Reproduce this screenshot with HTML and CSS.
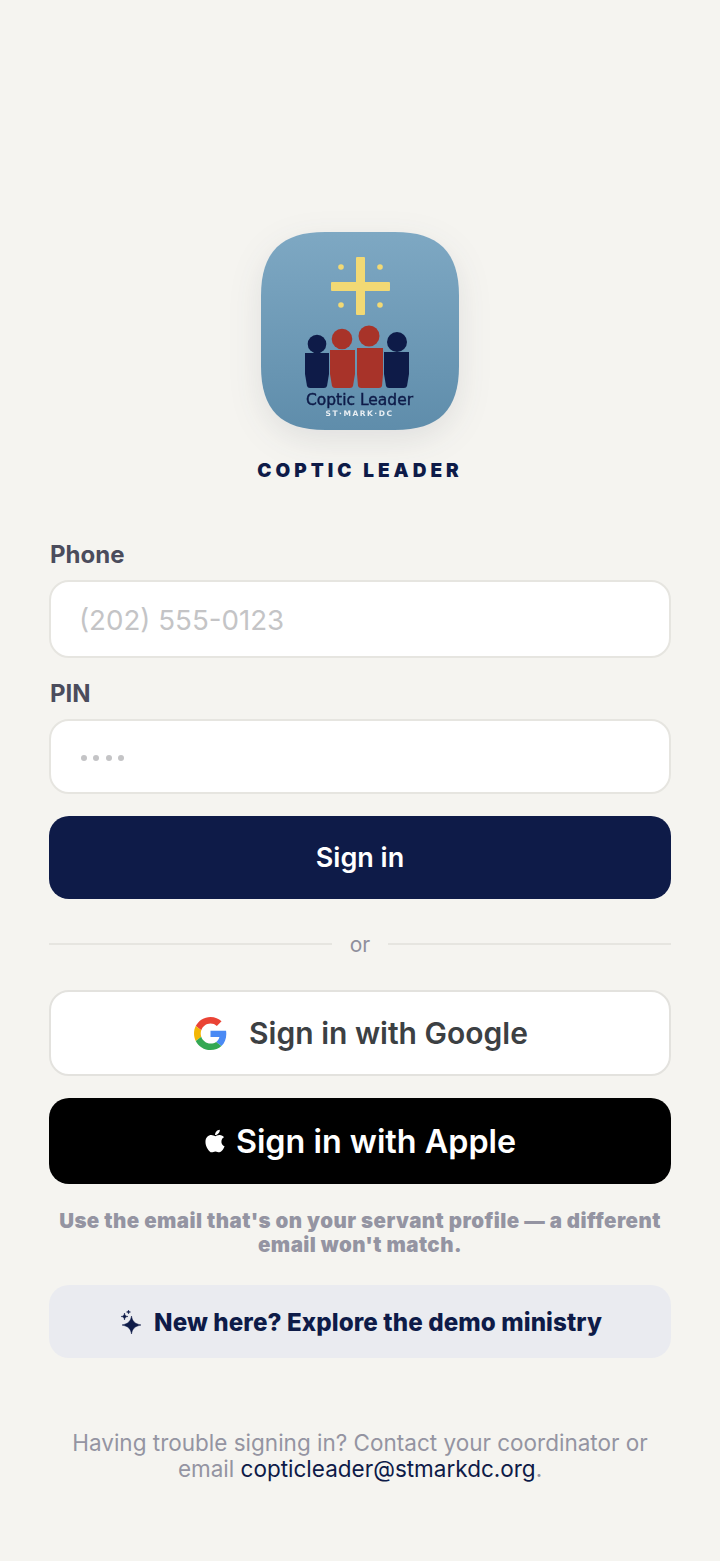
FILE: index.html
```html
<!doctype html>
<html>
<head>
  <meta charset="utf8">
  <title>Coptic Leader</title>
  <link rel="stylesheet" href="styles.css">
</head>
<body>
  <div class="page">
    <div class="brand">
      <svg class="logo" viewBox="0 0 198 198" width="198" height="198">
        <defs>
          <linearGradient id="tile" x1="0" y1="0" x2="0" y2="1">
            <stop offset="0" stop-color="#7ea8c3"/>
            <stop offset="1" stop-color="#5f8dab"/>
          </linearGradient>
        </defs>
        <path d="M64 0H134C178 0 198 20 198 64V134C198 178 178 198 134 198H64C20 198 0 178 0 134V64C0 20 20 0 64 0Z" fill="url(#tile)"/>
        <g transform="translate(1 0)">
          <!-- cross -->
          <g fill="#f2d974">
            <rect x="94" y="25" width="9" height="58" rx="1"/>
            <rect x="69" y="50" width="59" height="9" rx="1"/>
            <circle cx="79" cy="35" r="2.800"/>
            <circle cx="118" cy="35" r="2.800"/>
            <circle cx="79" cy="73" r="2.800"/>
            <circle cx="118" cy="73" r="2.800"/>
          </g>
          <!-- people -->
          <circle cx="55" cy="112" r="9.300" fill="#0e1b48"/>
          <path d="M43 121H67V142L65 154Q64.500 156 62 156H48Q45.500 156 45 154L43 142Z" fill="#0e1b48"/>
          <circle cx="80" cy="107" r="10.300" fill="#a83329"/>
          <path d="M68 118H93V142L91 154Q90.500 156 88 156H73Q70.500 156 70 154L68 142Z" fill="#a83329"/>
          <circle cx="107" cy="104" r="10.500" fill="#a83329"/>
          <path d="M95 116H121V142L120 154Q119.500 156 117 156H99Q96.500 156 96 154L95 142Z" fill="#a83329"/>
          <circle cx="135" cy="110" r="10" fill="#0e1b48"/>
          <path d="M122 120H147V142L145 154Q144.500 156 142 156H127Q124.500 156 124 154L122 142Z" fill="#0e1b48"/>
          <text class="logo-name" x="97.500" y="173" text-anchor="middle">Coptic Leader</text>
          <text class="logo-sub" x="97.500" y="184" text-anchor="middle">ST·MARK·DC</text>
        </g>
      </svg>
      <div class="brand-name">COPTIC LEADER</div>
    </div>

    <div class="field-label">Phone</div>
    <div class="input input-phone">(202) 555-0123</div>

    <div class="field-label label-pin">PIN</div>
    <div class="input input-pin">
      <span class="pin-dot"></span><span class="pin-dot"></span><span class="pin-dot"></span><span class="pin-dot"></span>
    </div>

    <div class="btn btn-primary">Sign in</div>

    <div class="divider"><span class="divider-line"></span><span>or</span><span class="divider-line"></span></div>

    <div class="btn btn-google">
      <svg class="google-icon" viewBox="0 0 48 48" width="33" height="33">
        <path fill="#ea4335" d="M24 9.500c3.540 0 6.710 1.220 9.210 3.600l6.850-6.850C35.900 2.380 30.470 0 24 0 14.620 0 6.510 5.380 2.560 13.220l7.980 6.190C12.430 13.720 17.740 9.500 24 9.500z"/>
        <path fill="#4a8af4" d="M46.980 24.550c0-1.570-.15-3.090-.38-4.550H24v9.020h12.940c-.58 2.960-2.260 5.480-4.780 7.180l7.730 6c4.510-4.180 7.090-10.360 7.090-17.650z"/>
        <path fill="#f3b605" d="M10.530 28.590c-.48-1.450-.76-2.990-.76-4.590s.27-3.140.76-4.590l-7.980-6.190C.92 16.460 0 20.120 0 24c0 3.880.92 7.540 2.560 10.780l7.970-6.190z"/>
        <path fill="#34a853" d="M24 48c6.480 0 11.930-2.130 15.890-5.810l-7.730-6c-2.150 1.450-4.920 2.300-8.160 2.300-6.260 0-11.570-4.220-13.470-9.910l-7.980 6.190C6.510 42.620 14.620 48 24 48z"/>
      </svg>
      <span>Sign in with Google</span>
    </div>

    <div class="btn btn-apple">
      <svg class="apple-icon" viewBox="0 0 384 512" width="22" height="26">
        <path fill="#fff" d="M318.700 268.700c-.2-36.700 16.400-64.400 50-84.800-18.800-26.900-47.200-41.700-84.700-44.600-35.500-2.800-74.300 20.700-88.500 20.700-15 0-49.400-19.700-76.400-19.700C63.300 141.200 4 184.800 4 273.500q0 39.300 14.400 81.200c12.800 36.700 59 126.700 107.200 125.200 25.200-.6 43-17.900 75.800-17.900 31.800 0 48.300 17.900 76.400 17.900 48.600-.7 90.400-82.500 102.600-119.300-65.200-30.700-61.700-90-61.700-91.900zm-56.600-164.200c27.300-32.400 24.800-61.900 24-72.500-24.100 1.400-52 16.400-67.900 34.900-17.500 19.800-27.800 44.300-25.600 71.900 26.100 2 49.900-11.400 69.500-34.300z"/>
      </svg>
      <span>Sign in with Apple</span>
    </div>

    <p class="hint">Use the email that's on your servant profile — a different email won't match.</p>

    <div class="btn btn-demo">
      <svg class="spark-icon" viewBox="0 0 24 26" width="24" height="26">
        <g fill="#0e1b48" stroke="#0e1b48" stroke-width="0.500" stroke-linejoin="round">
          <path d="M13.500 7C14.500 12.500 16.500 14.500 23 16C16.500 17.500 14.500 19.500 13.500 25C12.500 19.500 10.500 17.500 4 16C10.500 14.500 12.500 12.500 13.500 7Z"/>
          <path d="M6.500 4C6.900 6.500 7.500 7.100 10 7.500C7.500 7.900 6.900 8.500 6.500 11C6.100 8.500 5.500 7.900 3 7.500C5.500 7.100 6.100 6.500 6.500 4Z"/>
          <path d="M10.500 1C10.800 2.400 11 2.600 12.500 3C11 3.300 10.800 3.500 10.500 5C10.200 3.500 10 3.300 8.500 3C10 2.600 10.200 2.400 10.500 1Z"/>
        </g>
      </svg>
      <span>New here? Explore the demo ministry</span>
    </div>

    <div class="footer">
      <div>Having trouble signing in? Contact your coordinator or</div>
      <div>email <span class="footer-link">copticleader@stmarkdc.org</span>.</div>
    </div>
  </div>
</body>
</html>
```

FILE: styles.css
```css
html, body {
  margin: 0;
  padding: 0;
  background: #f5f4f0;
  font-family: Inter, "Liberation Sans", sans-serif;
}

.page {
  width: 720px;
  height: 1561px;
  box-sizing: border-box;
  padding: 232px 49px 0 49px;
  overflow: hidden;
}

.brand {
  display: flex;
  flex-direction: column;
  align-items: center;
}

.logo {
  display: block;
  filter: drop-shadow(0 10px 16px rgba(40, 50, 70, 0.10));
}

.logo-name {
  font-family: "DejaVu Sans", sans-serif;
  font-size: 15.500px;
  font-weight: 400;
  fill: #0e1b48;
  stroke: #0e1b48;
  stroke-width: 0.400px;
}

.logo-sub {
  font-family: "DejaVu Sans", sans-serif;
  font-size: 7.500px;
  font-weight: 700;
  letter-spacing: 1.500px;
  fill: #e8eef3;
}

.brand-name {
  margin-top: 30px;
  font-size: 19px;
  line-height: 22px;
  font-weight: 900;
  letter-spacing: 4px;
  color: #0e1b48;
}

.field-label {
  margin: 59px 0 0 1px;
  font-size: 24px;
  line-height: 28px;
  font-weight: 700;
  color: #4b4c5c;
}

.label-pin {
  margin-top: 22px;
}

.input {
  box-sizing: border-box;
  margin-top: 11px;
  background: #fff;
  border: 2px solid #e6e5e0;
  border-radius: 20px;
  display: flex;
  align-items: center;
}

.input-phone {
  height: 78px;
  padding: 2px 0 0 28px;
  font-size: 27.700px;
  color: #c4c4c6;
}

.input-pin {
  height: 75px;
  margin-top: 11px;
  padding: 3px 0 0 30px;
  gap: 6.400px;
}

.pin-dot {
  width: 6px;
  height: 6px;
  border-radius: 50%;
  background: #c4c4c6;
}

.btn {
  box-sizing: border-box;
  display: flex;
  align-items: center;
  justify-content: center;
  border-radius: 20px;
}

.btn-primary {
  height: 83px;
  margin-top: 22px;
  background: #0e1b48;
  color: #fff;
  font-size: 27px;
  font-weight: 600;
}

.divider {
  display: flex;
  align-items: center;
  gap: 18px;
  height: 26px;
  margin-top: 32px;
  font-size: 21px;
  color: #8f8f9c;
}

.divider-line {
  flex: 1;
  height: 2px;
  background: #e6e5e0;
}

.btn-google {
  height: 86px;
  margin-top: 33px;
  padding-left: 2px;
  background: #fff;
  border: 2px solid #e3e2de;
  color: #3c4043;
  font-size: 30px;
  font-weight: 600;
  gap: 22px;
}

.btn-apple {
  height: 86px;
  margin-top: 22px;
  background: #000;
  color: #fff;
  font-size: 32.300px;
  font-weight: 600;
  gap: 10px;
}

.hint {
  margin: 25px 0 0 0;
  font-size: 20.500px;
  line-height: 24px;
  font-weight: 900;
  letter-spacing: 0.440px;
  color: #9494a2;
  text-align: center;
}

.btn-demo {
  height: 73px;
  margin-top: 28px;
  padding-top: 1px;
  background: #eaebf0;
  color: #0e1b48;
  font-size: 24.200px;
  font-weight: 800;
  letter-spacing: 0.080px;
  gap: 12px;
}

.footer {
  margin: 72px 0 0 0;
  font-size: 22.500px;
  line-height: 25.500px;
  color: #9494a2;
  text-align: center;
}

.footer-link {
  color: #0e1b48;
}
```
